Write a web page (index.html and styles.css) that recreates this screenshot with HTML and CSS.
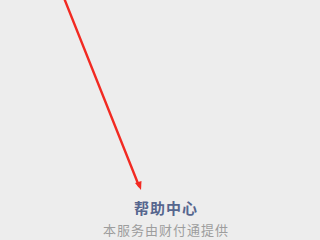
FILE: index.html
```html
<!DOCTYPE html>
<html lang="zh-CN">
<head>
  <meta charset="UTF-8" />
  <meta name="viewport" content="width=device-width, initial-scale=1.0"/>
  <title>帮助中心</title>
  <link rel="stylesheet" href="styles.css">
</head>
<body>
  <div class="page">
    <svg class="arrow" width="320" height="240" viewBox="0 0 320 240">
      <line x1="64" y1="-2" x2="139" y2="186" stroke="#f22a22" stroke-width="2.4" stroke-linecap="round"/>
      <path d="M135 183 L141 190 L141.5 181 Z" fill="#f22a22"/>
    </svg>

    <div class="footer">
      <div class="help-title">帮助中心</div>
      <div class="provider">本服务由财付通提供</div>
    </div>
  </div>
</body>
</html>
```

FILE: styles.css
```css
body {
  margin: 0;
  padding: 0;
  background-color: #ededed;
  font-family: "Noto Sans CJK SC", "Noto Sans", sans-serif;
}

.page {
  position: relative;
  width: 320px;
  height: 240px;
  display: flex;
  flex-direction: column;
  justify-content: flex-end;
  align-items: center;
  overflow: hidden;
}

.arrow {
  position: absolute;
  left: 0;
  top: 0;
}

.footer {
  display: flex;
  flex-direction: column;
  align-items: center;
  padding-left: 12px;
  padding-bottom: 1px;
}

.help-title {
  font-size: 15px;
  font-weight: bold;
  color: #56668e;
  line-height: 20px;
  letter-spacing: 1px;
}

.provider {
  margin-top: 3px;
  font-size: 13px;
  color: #9d9d9d;
  line-height: 18px;
  letter-spacing: 1px;
}
```
